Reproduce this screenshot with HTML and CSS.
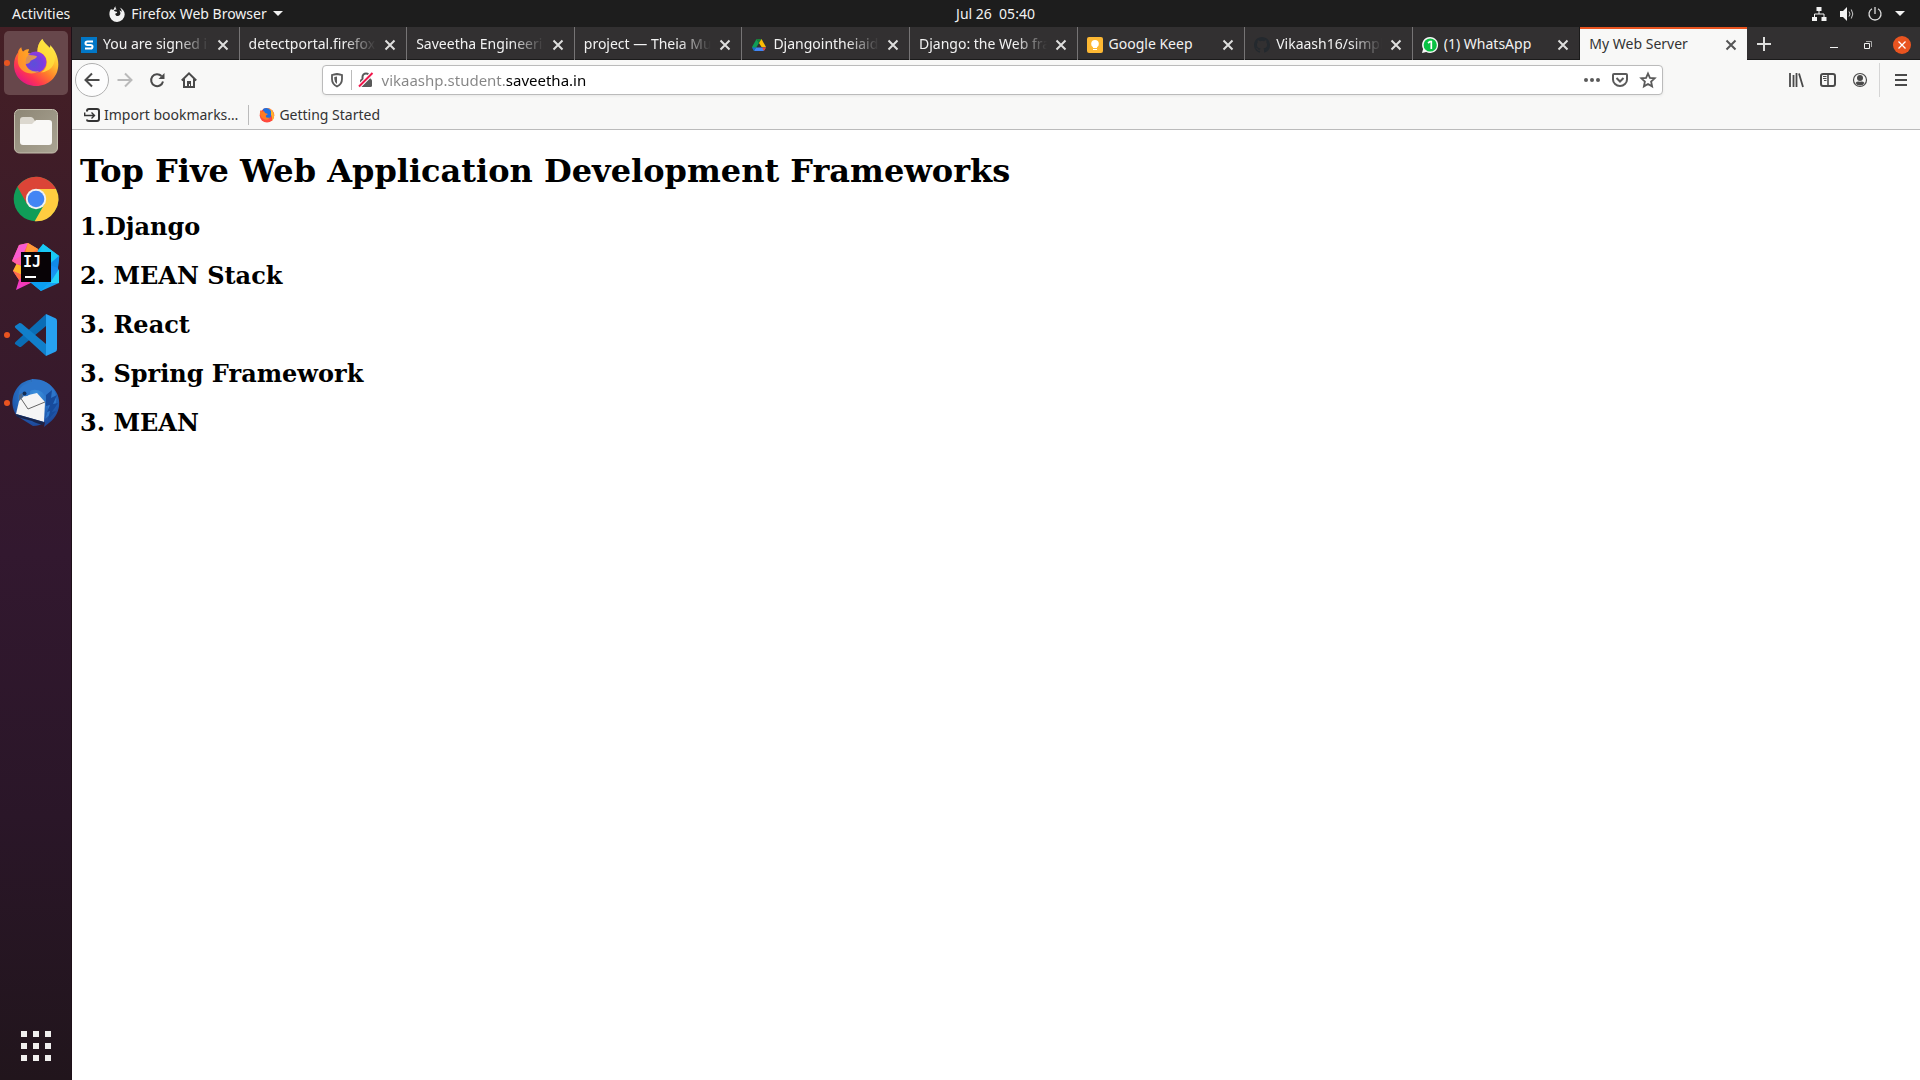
FILE: index.html
```html
<!DOCTYPE html>
<html lang="en">
<head>
<meta charset="utf-8">
<title>My Web Server</title>
<link rel="stylesheet" href="styles.css">
</head>
<body>
<svg class="defs" aria-hidden="true">
  <defs>
    <linearGradient id="fxBody" x1="0.85" y1="0.1" x2="0.2" y2="0.95">
      <stop offset="0" stop-color="#fff44f"/><stop offset="0.3" stop-color="#ffbd2f"/><stop offset="0.55" stop-color="#ff7a2b"/><stop offset="0.78" stop-color="#ff3750"/><stop offset="1" stop-color="#e31587"/>
    </linearGradient>
    <linearGradient id="fxHead" x1="0" y1="0" x2="1" y2="1">
      <stop offset="0" stop-color="#ff9a1f"/><stop offset="1" stop-color="#ffc22c"/>
    </linearGradient>
    <radialGradient id="fxGlobe" cx="0.4" cy="0.6" r="0.7">
      <stop offset="0" stop-color="#5b50d8"/><stop offset="0.6" stop-color="#7a3ce0"/><stop offset="1" stop-color="#a13bd8"/>
    </radialGradient>
    <linearGradient id="files" x1="0" y1="0" x2="1" y2="1">
      <stop offset="0" stop-color="#8d8675"/><stop offset="1" stop-color="#aaa493"/>
    </linearGradient>
    <linearGradient id="ijLeft" x1="0.6" y1="0" x2="0.4" y2="1">
      <stop offset="0" stop-color="#ff8a3c"/><stop offset="0.45" stop-color="#fe2f6b"/><stop offset="1" stop-color="#f13cd0"/>
    </linearGradient>
    <linearGradient id="ijRight" x1="0.5" y1="0" x2="0.6" y2="1">
      <stop offset="0" stop-color="#12d0f5"/><stop offset="0.5" stop-color="#1a8cf2"/><stop offset="1" stop-color="#14a9f4"/>
    </linearGradient>
    <radialGradient id="bird" cx="0.5" cy="0.3" r="0.75">
      <stop offset="0" stop-color="#3b8fdc"/><stop offset="0.6" stop-color="#2263b8"/><stop offset="1" stop-color="#1c3f8f"/>
    </radialGradient>
    <symbol id="close" viewBox="0 0 16 16"><path d="M3.500 3.500l9 9M12.500 3.500l-9 9" fill="none" stroke="currentColor" stroke-width="2"/></symbol>
  </defs>
</svg>

<header class="topbar">
  <div class="topbar-left">
    <button class="plain">Activities</button>
    <button class="plain app-menu">
      <svg width="16" height="16" viewBox="0 0 16 16"><path d="M6.500.2c-.2 1.500.2 2.400 1.300 3.100-1.500.4-2.500.6-3 1.500l1.500.8c1 .1 1.800.300 1.900.8-.5.7-1.500.9-2 1.300.2 1.600 1.200 2.300 2.400 2.300 2 0 3-1.400 2.800-3.200-.2-1-.5-1.600-1.200-2.200 1.400.2 2 .7 2.500 1.400 0-1.900-.7-3.200-2-4.600 3.200 1.300 5 4 5 7.100A7.600 7.600 0 0 1 8 16 7.600 7.600 0 0 1 .4 8.500C.3 6 1.100 4 2.300 2.800l.6 1.200c.7-.4 1.300-.5 2-.4C5 2.200 5.500 1 6.500.2z" fill="#f2f2f2"/></svg>
      <span>Firefox Web Browser</span>
      <svg width="10" height="6" viewBox="0 0 10 6"><path d="M0 0h10L5 5z" fill="#f2f2f2"/></svg>
    </button>
  </div>
  <button class="plain clock">Jul 26&nbsp; 05:40</button>
  <button class="plain status" aria-label="System menu">
    <svg width="16" height="16" viewBox="0 0 16 16"><path d="M5.500 1h5v4h-5zM1 11h5v4H1zM10.500 11h5v4h-5z" fill="#f2f2f2"/><path d="M8 5v3M3.500 11V8h9.500v3" fill="none" stroke="#f2f2f2"/></svg>
    <svg width="16" height="16" viewBox="0 0 16 16"><path d="M1 5h3l4-4v14l-4-4H1z" fill="#f2f2f2"/><path d="M10 5.500q2 2.500 0 5M12.300 3.500q3 4.500 0 9" fill="none" stroke="#ccc"/></svg>
    <svg width="16" height="16" viewBox="0 0 16 16"><path d="M5 2.800a6 6 0 1 0 6 0M8 1v7" fill="none" stroke="#ddd" stroke-width="1.300"/></svg>
    <svg width="10" height="6" viewBox="0 0 10 6"><path d="M0 0h10L5 5z" fill="#f2f2f2"/></svg>
  </button>
</header>

<div class="desktop">
  <nav class="dock" aria-label="Dock">
    <button class="tile active running" aria-label="Firefox">
      <svg width="48" height="48" viewBox="0 0 48 48">
        <path d="M30.300 0c1.500 3.500 4.500 6 7 9 1.200-.4 1-1.800.7-3 4.800 4.500 8.300 11.500 8.300 19.500C46.300 38 36.500 47 24.200 47 11.800 47 2 38 2 26c0-5 1.300-9 4-12.500 0-1.600 1-3.500 3.200-5.300.2 2 .7 3.300 1.800 4.500 1.500-1.700 4-2.500 6-2.500l-1 3.500 9 3c0-7 1.500-13 5.300-16.700z" fill="url(#fxBody)"/>
        <circle cx="24" cy="23" r="10.500" fill="url(#fxGlobe)"/>
        <path d="M30.300 0C26.500 4 25 8.500 26 12.500c5 1.500 8 5 9 9 .5 5-2 10-6 12 9-1 14-7 14-15C42.500 10 33 6 30.300 0z" fill="#ffe13d" opacity=".8"/>
        <path d="M9.200 8.200c.2 2 .7 3.300 1.800 4.500 1.500-1.700 4-2.500 6-2.500-1 1.500-1.500 3-1 5 2 1.600 8 .6 9 2.300-.5 2.500-6 3.300-6.500 4.500-.5 2-2.500 3-5 3 2 6 8 8.500 14 7C20 37 8 34 6 24c-.6-5 .4-11 3.200-15.800z" fill="url(#fxHead)" opacity=".75"/>
      </svg>
    </button>
    <button class="tile" aria-label="Files">
      <svg width="48" height="48" viewBox="0 0 48 48">
        <rect x="2.500" y="2.500" width="43" height="43.500" rx="5" fill="url(#files)" stroke="#c5bfae"/>
        <path d="M8 13a3 3 0 0 1 3-3h8q1.500 0 2.500 1.500L23 14v4H8z" fill="#dcd8cf"/>
        <path d="M8 17h12l4-4h13a3 3 0 0 1 3 3v19a3 3 0 0 1-3 3H11a3 3 0 0 1-3-3z" fill="#f9f8f6"/>
      </svg>
    </button>
    <button class="tile" aria-label="Chrome">
      <svg width="48" height="48" viewBox="0 0 48 48">
        <circle cx="24" cy="24" r="22.300" fill="#109d58"/>
        <path d="M24 14h20A22.300 22.300 0 0 0 5.500 11.800L15 29z" fill="#db4437"/>
        <path d="M24 14h20A22.300 22.300 0 0 1 22.700 46.300L32.500 29z" fill="#ffcd40"/>
        <circle cx="24" cy="24" r="10.200" fill="#f1f1f1"/><circle cx="24" cy="24" r="8.300" fill="#4285f4"/>
      </svg>
    </button>
    <button class="tile" aria-label="IntelliJ IDEA">
      <svg width="48" height="48" viewBox="0 0 48 48">
        <path d="M7 2L16 0l10 6 3 29L4 47l3-10-6-9 3.500-7L0 18z" fill="url(#ijLeft)"/>
        <path d="M7 2L16 0l-6 14L0 18z" fill="#f95bd0"/><path d="M16 0l10 6-14 8z" fill="#ff9a38"/><path d="M0 18l9-5v9l-4.500-1z" fill="#ff5fa8"/><path d="M4.500 21L1 28l9 4v-9z" fill="#fdb52b"/><path d="M1 28l6 9 4-4z" fill="#ff7043"/>
        <path d="M31 1l16.300 12L46 24l1 16-18 8-11-9 8-32z" fill="url(#ijRight)"/>
        <path d="M31 1l16 12-10 8-9-9z" fill="#18c9f5"/><path d="M47 13l-10 9 9 3z" fill="#108be9"/><path d="M38 40l9-14v14z" fill="#25d4f9"/><path d="M18 39l11 9 8-9z" fill="#0b9df0"/>
        <rect x="9" y="9" width="30" height="30" fill="#080306"/>
        <text x="11" y="24" class="ij">IJ</text>
        <rect x="13" y="33" width="11" height="2" fill="#fff"/>
      </svg>
    </button>
    <button class="tile running" aria-label="Visual Studio Code">
      <svg width="48" height="48" viewBox="0 0 48 48">
        <path d="M3 33l4.500 3q1 .3 2-.5L34 15V3L3.500 31q-1 1-.5 2z" fill="#0a6db5"/>
        <path d="M3 15l4.500-3q1-.3 2 .5L34 33v12L3.500 17q-1-1-.5-2z" fill="#117fca"/>
        <path d="M34 3l9.500 4.300Q45 8 45 10v28q0 2-1.500 2.700L34 45z" fill="#27a1f0"/>
      </svg>
    </button>
    <button class="tile running" aria-label="Thunderbird">
      <svg width="48" height="48" viewBox="0 0 48 48">
        <path d="M21 0q-2 2-1 3Q27-1 35 4c16 9 16 30 2 40l-5 4 1-5q-5 4-12 4L5 37C-3 26 0 12 10 4q5-3 11-4z" fill="url(#bird)"/>
        <path d="M8 18l17-4 8 9-1 20L4 35z" fill="#f5f5f5"/>
        <path d="M8 18l8 12 17-7" fill="none" stroke="#555" stroke-width=".9"/>
        <path d="M20 0q-1 2 0 4-10 0-13 8l-1 9q3-1 6-4 3 1 6-2-1-3 2-4 10-2 15 9 3 10-2 20 15-12 10-27Q37 0 20 0z" fill="#2d75ca"/>
        <path d="M34 16l6-5-1 8 6-3-4 9 5-1-6 9 4-1-8 9 2-9-3 1 3-7-4 1z" fill="#174b9c"/>
        <circle cx="12.500" cy="14.500" r="2" fill="#132d55"/><path d="M7 16l3-2 1 4-4 4z" fill="#50698a"/>
        <path d="M4 35l28 8-1 3q-8-2-11-4L5 38z" fill="#17254d"/>
      </svg>
    </button>
    <button class="tile apps" aria-label="Show applications">
      <svg width="48" height="48" viewBox="0 0 48 48"><path d="M9 9h6v6H9zM21 9h6v6h-6zM33 9h6v6h-6zM9 21h6v6H9zM21 21h6v6h-6zM33 21h6v6h-6zM9 33h6v6H9zM21 33h6v6h-6zM33 33h6v6h-6z" fill="#f0efee"/></svg>
    </button>
  </nav>

  <div class="browser">
    <div class="tabstrip">
      <div class="tabs">
        <div class="tab"><svg width="16" height="16" viewBox="0 0 16 16"><path d="M0 0h16v16H0z" fill="#0277c6"/><path d="M12 4.500H6.500Q4.500 4.500 4.500 6.200T6.500 8h3q2 0 2 1.800T9.500 11.500H4" fill="none" stroke="#fff" stroke-width="2"/></svg><button class="plain title fade">You are signed in</button><button class="plain x" aria-label="Close tab"><svg width="16" height="16"><use href="#close"/></svg></button></div>
        <div class="tab"><button class="plain title fade">detectportal.firefox</button><button class="plain x" aria-label="Close tab"><svg width="16" height="16"><use href="#close"/></svg></button></div>
        <div class="tab"><button class="plain title fade">Saveetha Engineering</button><button class="plain x" aria-label="Close tab"><svg width="16" height="16"><use href="#close"/></svg></button></div>
        <div class="tab"><button class="plain title fade">project — Theia Mul</button><button class="plain x" aria-label="Close tab"><svg width="16" height="16"><use href="#close"/></svg></button></div>
        <div class="tab"><svg width="16" height="16" viewBox="0 0 16 16"><path d="M5.500 2L1 10l2 4 5-8z" fill="#0f9d58"/><path d="M5.500 2h5L8 6z" fill="#188038"/><path d="M10.500 2L15 10h-4.500L8 6z" fill="#fbbc04"/><path d="M5 10.500h10L12.500 14H3z" fill="#4285f4"/><path d="M1 10.500h4L3 14z" fill="#1967d2"/><path d="M11 10.500h4L13 14z" fill="#ea4335"/></svg><button class="plain title fade">Djangointheiaide</button><button class="plain x" aria-label="Close tab"><svg width="16" height="16"><use href="#close"/></svg></button></div>
        <div class="tab"><button class="plain title fade">Django: the Web fram</button><button class="plain x" aria-label="Close tab"><svg width="16" height="16"><use href="#close"/></svg></button></div>
        <div class="tab"><svg width="16" height="16" viewBox="0 0 16 16"><rect width="16" height="16" rx="2" fill="#fdb833"/><circle cx="8" cy="6.800" r="3.800" fill="#fff"/><path d="M6 9h4v2H6zM6 12h4v1H6z" fill="#fff"/></svg><button class="plain title">Google Keep</button><button class="plain x" aria-label="Close tab"><svg width="16" height="16"><use href="#close"/></svg></button></div>
        <div class="tab"><svg width="16" height="16" viewBox="0 0 16 16"><path fill="#24292e" d="M8 0C3.580 0 0 3.580 0 8c0 3.540 2.290 6.530 5.470 7.590.4.070.55-.17.55-.38 0-.19-.01-.82-.01-1.490-2.010.37-2.530-.49-2.690-.94-.09-.23-.48-.94-.82-1.130-.28-.15-.68-.52-.01-.53.63-.01 1.080.58 1.230.82.72 1.210 1.870.87 2.330.66.070-.52.28-.87.51-1.070-1.780-.2-3.640-.89-3.640-3.950 0-.87.31-1.590.82-2.150-.08-.2-.36-1.020.08-2.120 0 0 .67-.21 2.200.82a7.600 7.600 0 0 1 4 0c1.530-1.040 2.200-.82 2.200-.82.44 1.100.16 1.920.08 2.120.51.56.82 1.270.82 2.150 0 3.070-1.870 3.750-3.650 3.950.29.25.54.73.54 1.480 0 1.070-.01 1.930-.01 2.200 0 .21.15.46.55.38A8.010 8.010 0 0 0 16 8c0-4.420-3.580-8-8-8z"/></svg><button class="plain title fade">Vikaash16/simple</button><button class="plain x" aria-label="Close tab"><svg width="16" height="16"><use href="#close"/></svg></button></div>
        <div class="tab"><svg width="16" height="16" viewBox="0 0 16 16"><path d="M8 0a8 8 0 1 1-3.800 15L0 16l1.100-4A8 8 0 0 1 8 0z" fill="#f5f5f5"/><circle cx="8.200" cy="8" r="6.600" fill="#09c143"/><path d="M6 6l2-1.500h1.300V12" fill="none" stroke="#fff" stroke-width="1.700"/></svg><button class="plain title">(1) WhatsApp</button><button class="plain x" aria-label="Close tab"><svg width="16" height="16"><use href="#close"/></svg></button></div>
        <div class="tab current"><button class="plain title">My Web Server</button><button class="plain x" aria-label="Close tab"><svg width="16" height="16"><use href="#close"/></svg></button></div>
      </div>
      <button class="plain new-tab" aria-label="New tab"><svg width="16" height="16" viewBox="0 0 16 16"><path d="M8 1v14M1 8h14" stroke="#dededd" stroke-width="2"/></svg></button>
      <div class="window-buttons">
        <button class="plain" aria-label="Minimize"><svg width="18" height="18" viewBox="0 0 18 18"><path d="M5 11.500h8" stroke="#f2f2f2"/></svg></button>
        <button class="plain" aria-label="Restore"><svg width="18" height="18" viewBox="0 0 18 18"><path d="M7 5.500h5.500V11" fill="none" stroke="#aaa"/><path d="M5.500 7.500h5v5h-5z" fill="none" stroke="#f2f2f2"/></svg></button>
        <button class="plain" aria-label="Close"><svg width="18" height="18" viewBox="0 0 18 18"><circle cx="9" cy="9" r="9" fill="#e95420"/><path d="M5.500 5.500l7 7M12.500 5.500l-7 7" stroke="#fff" stroke-width="1.300"/></svg></button>
      </div>
    </div>

    <div class="toolbar">
      <div class="nav-buttons">
        <button class="plain back" aria-label="Back"><svg width="16" height="16" viewBox="0 0 16 16"><path d="M15.500 8H1.500M8 1.500L1.500 8 8 14.500" fill="none" stroke="#4a4a4a" stroke-width="2"/></svg></button>
        <button class="plain tool" aria-label="Forward" disabled><svg width="16" height="16" viewBox="0 0 16 16"><path d="M.5 8h14M8 1.500L14.500 8 8 14.500" fill="none" stroke="#bababa" stroke-width="2"/></svg></button>
        <button class="plain tool" aria-label="Reload"><svg width="16" height="16" viewBox="0 0 16 16"><path d="M12.500 4A6 6 0 1 0 14 9.500" fill="none" stroke="#4a4a4a" stroke-width="2"/><path d="M15.500 1v6h-6z" fill="#4a4a4a"/></svg></button>
        <button class="plain tool" aria-label="Home"><svg width="16" height="16" viewBox="0 0 16 16"><path d="M.8 8.500L8 1.300l7.200 7.200M3 7v8h10V7" fill="none" stroke="#4a4a4a" stroke-width="2"/><path d="M6 9h4v6H9v-3H8v3H6z" fill="#4a4a4a"/></svg></button>
      </div>
      <div class="spring"></div>
      <div class="urlbar">
        <button class="plain tool" aria-label="Tracking protection"><svg width="16" height="16" viewBox="0 0 16 16"><path d="M8 2Q11 2.500 13 3v4q0 5-5 7.500Q3 12 3 7V3q2-.5 5-1z" fill="none" stroke="#5a5a5a" stroke-width="1.800"/><path d="M8 4.500v7.500Q5.300 10 5.300 7V5z" fill="#5a5a5a"/></svg></button>
        <span class="divider"></span>
        <button class="plain tool" aria-label="Connection is not secure"><svg width="16" height="16" viewBox="0 0 16 16"><path d="M4.500 8V5a3.500 3.500 0 0 1 7 0v3" fill="none" stroke="#5a5a5a" stroke-width="2"/><rect x="2" y="7" width="12" height="8" rx="1.500" fill="#5a5a5a"/><path d="M1 14.500L14.500 1" stroke="#fff" stroke-width="4"/><path d="M1 14.500L14.500 1" stroke="#f0164b" stroke-width="2"/></svg></button>
        <input type="text" class="address" aria-label="Address" value="vikaashp.student.saveetha.in">
        <button class="plain tool" aria-label="Page actions"><svg width="16" height="16" viewBox="0 0 16 16"><g fill="#5a5a5a"><circle cx="2" cy="8" r="2"/><circle cx="8" cy="8" r="2"/><circle cx="14" cy="8" r="2"/></g></svg></button>
        <button class="plain tool" aria-label="Save to Pocket"><svg width="16" height="16" viewBox="0 0 16 16"><path d="M1 3q0-1 1-1h12q1 0 1 1v4.500a7 6.500 0 0 1-14 0z" fill="none" stroke="#5a5a5a" stroke-width="2"/><path d="M4.500 6L8 9.500 11.500 6" fill="none" stroke="#5a5a5a" stroke-width="2"/></svg></button>
        <button class="plain tool" aria-label="Bookmark this page"><svg width="16" height="16" viewBox="0 0 16 16"><path d="M8 1.500l1.900 4.300 4.800.5-3.600 3.200 1 4.900L8 12l-4.100 2.400 1-4.900L1.300 6.300l4.800-.5z" fill="none" stroke="#5a5a5a" stroke-width="1.800"/></svg></button>
      </div>
      <div class="spring"></div>
      <div class="end-buttons">
        <button class="plain tool" aria-label="Library"><svg width="16" height="16" viewBox="0 0 16 16"><path d="M2 1v14M5.500 3v12M8.500 1v14M11 1.500L15 15" stroke="#4a4a4a" stroke-width="1.800"/></svg></button>
        <button class="plain tool" aria-label="Sidebars"><svg width="16" height="16" viewBox="0 0 16 16"><rect x="1" y="2" width="14" height="12" rx="2" fill="none" stroke="#4a4a4a" stroke-width="2"/><path d="M8 2v12" stroke="#4a4a4a" stroke-width="1.600"/><path d="M3 4.500h3.500M3 6.500h3.500M4 8.500h2.500" stroke="#4a4a4a"/></svg></button>
        <button class="plain tool" aria-label="Account"><svg width="16" height="16" viewBox="0 0 16 16"><circle cx="8" cy="8" r="6.500" fill="none" stroke="#4a4a4a" stroke-width="1.200"/><circle cx="8" cy="6" r="3" fill="#4a4a4a"/><path d="M3.500 11Q5 9 8 9.800 11 9 12.500 11 11 13.500 8 13.500T3.500 11z" fill="#4a4a4a"/></svg></button>
        <span class="divider tall"></span>
        <button class="plain tool" aria-label="Open menu"><svg width="16" height="16" viewBox="0 0 16 16"><path d="M2 3h12M2 8h12M2 13h12" stroke="#4a4a4a" stroke-width="2"/></svg></button>
      </div>
    </div>

    <div class="bookmarks">
      <button class="plain bookmark"><svg width="16" height="16" viewBox="0 0 16 16"><path d="M3 4.500V4q0-2 2-2h8q2 0 2 2v8q0 2-2 2H5q-2 0-2-1.500" fill="none" stroke="#333" stroke-width="2"/><path d="M.7 5.500V8.500H10M7.500 5.500l3 3-3 3" fill="none" stroke="#333" stroke-width="1.400"/></svg><span>Import bookmarks…</span></button>
      <span class="divider"></span>
      <a class="bookmark" href="#"><svg width="16" height="16" viewBox="0 0 16 16"><circle cx="8" cy="8.300" r="7.300" fill="#ff4a3d"/><path d="M8 1q7 1 7 8 0 3-2 5 1-6-3-8z" fill="#ffb52e"/><path d="M4 2q5-3 8 2v4q0 3-3 4-3 0-4-3z" fill="#1e6fe0"/><path d="M1 3l2 2 2-1 1 2 3 1-2 1.500q-1 3 4 2-2 3-5 2Q1 11 1 6z" fill="#ff7a22"/></svg><span>Getting Started</span></a>
    </div>

    <main class="page">
      <h1>Top Five Web Application Development Frameworks</h1>
      <h2>1.Django</h2>
      <h2>2. MEAN Stack</h2>
      <h2>3. React</h2>
      <h2>3. Spring Framework</h2>
      <h2>3. MEAN</h2>
    </main>
  </div>
</div>
</body>
</html>
```
FILE: styles.css
```css
* { box-sizing: border-box; }

body {
  margin: 0;
  min-height: 100vh;
  display: flex;
  flex-direction: column;
  font: 14px/20px "Noto Sans", sans-serif;
  color: #333;
  background: #fff;
}

.defs { position: absolute; width: 0; height: 0; }
svg { display: block; flex: none; overflow: visible; }

.plain {
  margin: 0;
  padding: 0;
  border: 0;
  background: none;
  color: inherit;
  font: inherit;
  text-align: left;
}

/* System bar */
.topbar {
  display: grid;
  grid-template-columns: 1fr auto 1fr;
  align-items: center;
  height: 27px;
  padding: 0 15px 0 12px;
  background: #1d1d1d;
  color: #f2f2f2;
}
.topbar-left { display: flex; align-items: center; gap: 39px; }
.app-menu { display: flex; align-items: center; gap: 6px; }
.clock { padding-left: 74px; }
.status { display: flex; align-items: center; justify-content: flex-end; gap: 12px; }

.desktop { flex: 1; display: flex; }

/* Dock */
.dock {
  flex: none;
  width: 72px;
  padding: 4px 3px 2px 4px;
  display: flex;
  flex-direction: column;
  gap: 4px;
  border-right: 1px solid #1d1018;
  background: linear-gradient(#451f25, #3a1b2a 25%, #32182f 50%, #2a1628 75%, #21151c);
}
.tile {
  position: relative;
  width: 64px;
  height: 64px;
  padding: 8px;
  border: 0;
  border-radius: 5px;
  background: none;
}
.tile.active { background: #67474b; }
.tile.running::before {
  content: "";
  position: absolute;
  left: 0;
  top: 29px;
  width: 6px;
  height: 6px;
  border-radius: 50%;
  background: #e95420;
}
.apps { margin-top: auto; }
.ij { font: bold 15px "DejaVu Sans Mono", monospace; fill: #fff; }

/* Browser chrome */
.browser { flex: 1; min-width: 0; display: flex; flex-direction: column; }

.tabstrip {
  display: flex;
  height: 33px;
  background: #323031;
  color: #f2f2f2;
  box-shadow: inset 0 -1px #1b1b1b;
}
.tabs { flex: 1; min-width: 0; display: flex; }
.tab {
  flex: 1 1 0;
  min-width: 0;
  display: flex;
  align-items: center;
  gap: 6px;
  padding: 2px 8px 0 9px;
  border-right: 1px solid #767475;
}
.tab:nth-last-child(2) { border-color: #1b1b1b; }
.tab.current {
  padding-top: 0;
  border-top: 2px solid #e95420;
  border-right: 0;
  background: #f8f8f7;
  color: #333;
}
.title { flex: 1; min-width: 0; padding-bottom: 2px; overflow: hidden; white-space: nowrap; }
.fade { mask-image: linear-gradient(to left, transparent, #000 32px); }
.x { color: #dededd; }
.current .x { color: #555; }
.new-tab { width: 34px; display: flex; align-items: center; justify-content: center; }
.window-buttons {
  display: flex;
  align-items: center;
  gap: 16px;
  padding: 2px 9px 0 44px;
}

.toolbar {
  display: flex;
  align-items: center;
  height: 40px;
  padding: 0 3px;
  background: #f8f8f7;
}
.nav-buttons, .end-buttons { display: flex; align-items: center; }
.tool {
  width: 32px;
  height: 32px;
  display: flex;
  align-items: center;
  justify-content: center;
}
.back {
  width: 34px;
  height: 34px;
  display: flex;
  align-items: center;
  justify-content: center;
  border: 1px solid #b0b0b0;
  border-radius: 50%;
  background: #fdfdfd;
}
.spring { flex: 2; }
.urlbar {
  flex: 23;
  display: flex;
  align-items: center;
  height: 30px;
  border: 1px solid #bbb;
  border-radius: 4px;
  background: #fff;
  box-shadow: 0 1px 3px #0001;
}
.urlbar .tool { width: 28px; height: 28px; }
.address {
  flex: 1;
  min-width: 0;
  padding: 0 2px;
  border: 0;
  outline: 0;
  font: inherit;
  font-size: 15px;
  color: #000;
  background: linear-gradient(to right, #858585 126px, #000 126px);
  background-clip: text;
  -webkit-background-clip: text;
  -webkit-text-fill-color: transparent;
}
.divider { flex: none; width: 1px; height: 20px; background: #bbb; }
.divider.tall { height: 34px; margin: 0 5px 0 3px; background: #d5d5d5; }

.bookmarks {
  display: flex;
  align-items: center;
  gap: 10px;
  height: 30px;
  padding: 0 12px;
  border-bottom: 1px solid #bbb;
  background: #f8f8f7;
}
.bookmark {
  display: flex;
  align-items: center;
  gap: 4px;
  color: #333;
  text-decoration: none;
}

/* Page */
.page {
  flex: 1;
  padding: 22px 8px;
  font-family: "DejaVu Serif", serif;
  color: #000;
}
h1 { margin: 0 0 22px; font-size: 32px; line-height: 39px; }
h2 { margin: 21px 0; font-size: 24px; line-height: 28px; }
```
